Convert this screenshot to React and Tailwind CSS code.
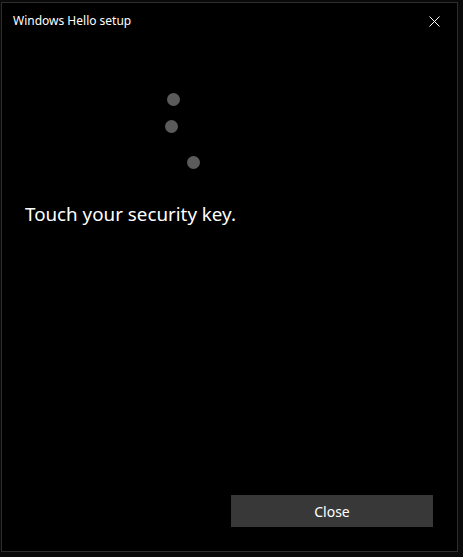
import React from 'react';

const Dot = ({ className }) => (
  <div className={`absolute w-[13px] h-[13px] rounded-full bg-[#5b5b5b] ${className}`} />
);

const App = () => {
  return (
    <div className="w-[463px] h-[557px] bg-[#0a0a0a] pt-[2px] pl-[1px] font-['Segoe_UI','Noto_Sans',sans-serif]">
      <div className="w-[457px] h-[550px] border border-[#2e2e2e] bg-black flex flex-col">
        {/* Title bar */}
        <div className="h-[36px] flex items-center justify-between pl-[11px] pr-[17px]">
          <span className="text-[12px] text-white">Windows Hello setup</span>
          <svg width="11" height="11" viewBox="0 0 11 11" className="text-white">
            <path d="M0.5 0.5 L10.5 10.5 M10.5 0.5 L0.5 10.5" stroke="currentColor" strokeWidth="1" />
          </svg>
        </div>

        {/* Progress dots */}
        <div className="relative h-[162px]">
          <Dot className="left-[165px] top-[54px]" />
          <Dot className="left-[163px] top-[81px]" />
          <Dot className="left-[185px] top-[117px]" />
        </div>

        <p className="pl-[23px] text-[18.8px] leading-[26px] text-white">Touch your security key.</p>

        <div className="flex-1" />

        <div className="flex justify-end pr-[24px] pb-[24px]">
          <button className="w-[202px] h-[32px] bg-[#383838] text-white text-[14px]">Close</button>
        </div>
      </div>
    </div>
  );
};

export default App;
